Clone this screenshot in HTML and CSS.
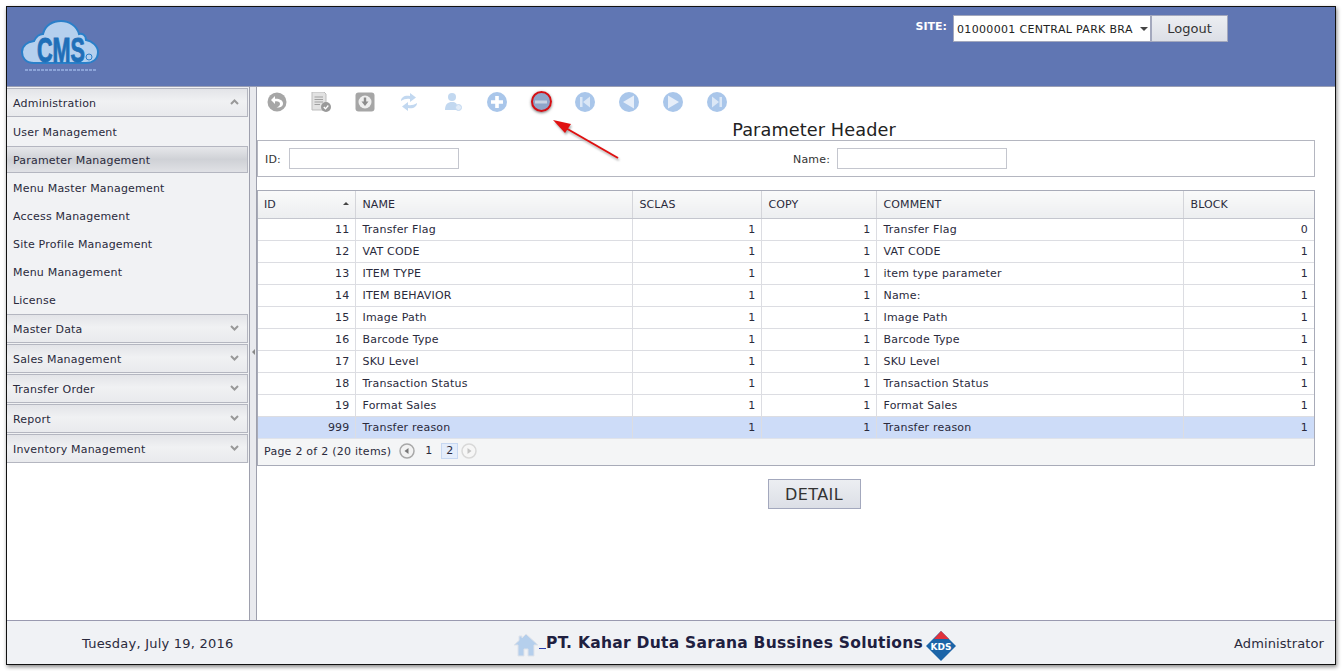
FILE: index.html
```html
<!DOCTYPE html>
<html lang="en">

<head>
	<meta charset="UTF-8">
	<title>CMS - Parameter Management</title>
	<link rel="stylesheet" href="styles.css">
</head>

<body>
	<div id="frame">
		<header id="top">
			<div class="logo">
				<svg width="80" height="56" viewBox="0 0 80 56">
					<path d="M14 44 C5 44 2 38 2 33 C2 27 7 23 14 22 C16 18 19 15 23 15 C25 6 33 2 41 2 C49 2 57 7 59 15 C62 14 66 16 66 21 C72 22 78 27 78 33 C78 40 73 44 66 44 Z" fill="#b5d0ee" stroke="#2a7fc9" stroke-width="2"/>
					<text x="17" y="27" transform="scale(1 1.6)" class="logo-text">CMS</text>
					<circle cx="69" cy="38" r="3" fill="#b5d0ee" stroke="#2a7fc9"/>
					<path d="M5 51 H76" stroke="#8ba3d8" stroke-width="2" stroke-dasharray="3 1"/>
				</svg>
			</div>
			<div class="site">
				<span class="site-label">SITE:</span>
				<div class="site-select">01000001 CENTRAL PARK BRA<span class="caret"></span></div>
				<button class="logout">Logout</button>
			</div>
		</header>

		<div id="middle">
			<nav id="side">
				<div class="panel open">Administration
					<svg class="chev" width="9" height="6" viewBox="0 0 9 6"><path d="M1 5 L4.500 1.500 L8 5" fill="none" stroke="#999" stroke-width="2"/></svg>
				</div>
				<a class="item">User Management</a>
				<a class="item selected">Parameter Management</a>
				<a class="item">Menu Master Management</a>
				<a class="item">Access Management</a>
				<a class="item">Site Profile Management</a>
				<a class="item">Menu Management</a>
				<a class="item">License</a>
				<div class="panel">Master Data
					<svg class="chev" width="9" height="6" viewBox="0 0 9 6"><path d="M1 1 L4.500 4.500 L8 1" fill="none" stroke="#999" stroke-width="2"/></svg>
				</div>
				<div class="panel">Sales Management
					<svg class="chev" width="9" height="6" viewBox="0 0 9 6"><path d="M1 1 L4.500 4.500 L8 1" fill="none" stroke="#999" stroke-width="2"/></svg>
				</div>
				<div class="panel">Transfer Order
					<svg class="chev" width="9" height="6" viewBox="0 0 9 6"><path d="M1 1 L4.500 4.500 L8 1" fill="none" stroke="#999" stroke-width="2"/></svg>
				</div>
				<div class="panel">Report
					<svg class="chev" width="9" height="6" viewBox="0 0 9 6"><path d="M1 1 L4.500 4.500 L8 1" fill="none" stroke="#999" stroke-width="2"/></svg>
				</div>
				<div class="panel">Inventory Management
					<svg class="chev" width="9" height="6" viewBox="0 0 9 6"><path d="M1 1 L4.500 4.500 L8 1" fill="none" stroke="#999" stroke-width="2"/></svg>
				</div>
			</nav>

			<div id="splitter"><span class="grip"></span></div>

			<main id="content">
				<div class="toolbar">
					<svg width="20" height="20" viewBox="0 0 20 20"><circle cx="10" cy="10" r="9.500" fill="#a6a6a6"/><path d="M8 4 L4 8 L8 12 V9.500 C11 9 13 10 13 12 C13 14 11 15 9.500 15.500 C13 16 16 14.500 16 11.500 C16 8 12 6.500 8 6.800 Z" fill="#fff"/></svg>
					<svg width="20" height="20" viewBox="0 0 20 20"><path d="M1 0 H13 L15 2 V18 H1 Z" fill="#e2e2e2" stroke="#bdbdbd"/><path d="M3.500 5 H12 M3.500 7.500 H12 M3.500 10 H12 M3.500 12.500 H9" stroke="#a0a0a0"/><circle cx="15" cy="15" r="5" fill="#999"/><path d="M12.800 15 L14.500 16.800 L17.300 13.500" fill="none" stroke="#fff" stroke-width="1.300"/></svg>
					<svg width="20" height="20" viewBox="0 0 20 20"><rect x="0.500" y="0.500" width="19" height="19" rx="3" fill="#a6a6a6"/><circle cx="10" cy="10" r="6.500" fill="#eee"/><path d="M8.800 5.500 H11.200 V9.500 H13.500 L10 14 L6.500 9.500 H8.800 Z" fill="#8c8c8c"/></svg>
					<svg width="20" height="20" viewBox="0 0 20 20"><path d="M2 9 C2 5 6 3 11 4 V1 L17 5.500 L11 10 V7 C8 6.500 5 7 2 9 Z M18 11 C18 15 14 17 9 16 V19 L3 14.500 L9 10 V13 C12 13.500 15 13 18 11 Z" fill="#c2d8f0"/></svg>
					<svg width="20" height="20" viewBox="0 0 20 20"><circle cx="9" cy="5" r="4" fill="#c2d8f0"/><path d="M2 18 C2 12 5 10 9 10 C13 10 14 12 14 14 V18 Z" fill="#c2d8f0"/><circle cx="15.500" cy="15.500" r="3" fill="#e2ecf8" stroke="#c2d8f0"/></svg>
					<svg width="20" height="20" viewBox="0 0 20 20"><circle cx="10" cy="10" r="10" fill="#a9c6ea"/><path d="M8.200 4 H11.800 V8.200 H16 V11.800 H11.800 V16 H8.200 V11.800 H4 V8.200 H8.200 Z" fill="#fff"/></svg>
					<svg width="20" height="20" viewBox="0 0 20 20"><circle cx="10" cy="10" r="10" fill="#8fa5c9"/><rect x="4" y="8.500" width="12" height="3" fill="#c9d3e3"/></svg>
					<svg width="20" height="20" viewBox="0 0 20 20"><circle cx="10" cy="10" r="10" fill="#a9c6ea"/><path d="M5 5 H7.500 V15 H5 Z M15 4.500 V15.500 L8 10 Z" fill="#dbe7f6"/></svg>
					<svg width="20" height="20" viewBox="0 0 20 20"><circle cx="10" cy="10" r="10" fill="#a9c6ea"/><path d="M15 3.500 V16.500 L4 10 Z" fill="#e6eef9"/></svg>
					<svg width="20" height="20" viewBox="0 0 20 20"><circle cx="10" cy="10" r="10" fill="#a9c6ea"/><path d="M5 3.500 V16.500 L16 10 Z" fill="#e6eef9"/></svg>
					<svg width="20" height="20" viewBox="0 0 20 20"><circle cx="10" cy="10" r="10" fill="#a9c6ea"/><path d="M15 5 H12.500 V15 H15 Z M5 4.500 V15.500 L12 10 Z" fill="#dbe7f6"/></svg>
				</div>

				<h1 class="title">Parameter Header</h1>

				<div class="filter">
					<label class="filter-id">ID:</label>
					<input class="field" type="text">
					<label class="filter-name">Name:</label>
					<input class="field" type="text">
				</div>

				<div class="grid">
					<table>
						<colgroup>
							<col class="c-id"><col class="c-name"><col class="c-sclas"><col class="c-copy"><col class="c-comment"><col>
						</colgroup>
						<thead>
							<tr>
								<th>ID<span class="sort"></span></th>
								<th>NAME</th>
								<th>SCLAS</th>
								<th>COPY</th>
								<th>COMMENT</th>
								<th>BLOCK</th>
							</tr>
						</thead>
						<tbody>
							<tr><td class="num">11</td><td>Transfer Flag</td><td class="num">1</td><td class="num">1</td><td>Transfer Flag</td><td class="num">0</td></tr>
							<tr><td class="num">12</td><td>VAT CODE</td><td class="num">1</td><td class="num">1</td><td>VAT CODE</td><td class="num">1</td></tr>
							<tr><td class="num">13</td><td>ITEM TYPE</td><td class="num">1</td><td class="num">1</td><td>item type parameter</td><td class="num">1</td></tr>
							<tr><td class="num">14</td><td>ITEM BEHAVIOR</td><td class="num">1</td><td class="num">1</td><td>Name:</td><td class="num">1</td></tr>
							<tr><td class="num">15</td><td>Image Path</td><td class="num">1</td><td class="num">1</td><td>Image Path</td><td class="num">1</td></tr>
							<tr><td class="num">16</td><td>Barcode Type</td><td class="num">1</td><td class="num">1</td><td>Barcode Type</td><td class="num">1</td></tr>
							<tr><td class="num">17</td><td>SKU Level</td><td class="num">1</td><td class="num">1</td><td>SKU Level</td><td class="num">1</td></tr>
							<tr><td class="num">18</td><td>Transaction Status</td><td class="num">1</td><td class="num">1</td><td>Transaction Status</td><td class="num">1</td></tr>
							<tr><td class="num">19</td><td>Format Sales</td><td class="num">1</td><td class="num">1</td><td>Format Sales</td><td class="num">1</td></tr>
							<tr class="active"><td class="num">999</td><td>Transfer reason</td><td class="num">1</td><td class="num">1</td><td>Transfer reason</td><td class="num">1</td></tr>
						</tbody>
					</table>
					<div class="pager">
						<span class="pager-info">Page 2 of 2 (20 items)</span>
						<svg class="pager-btn" width="16" height="16" viewBox="0 0 16 16"><circle cx="8" cy="8" r="7" fill="#f2f2f2" stroke="#a8a8a8" stroke-width="1.500"/><path d="M9.500 5 V11 L5.500 8 Z" fill="#777"/></svg>
						<span class="page">1</span>
						<span class="page current">2</span>
						<svg class="pager-btn" width="16" height="16" viewBox="0 0 16 16"><circle cx="8" cy="8" r="7" fill="#f6f6f6" stroke="#d8d8d8" stroke-width="1.500"/><path d="M6.500 5 V11 L10.500 8 Z" fill="#c4c4c4"/></svg>
					</div>
				</div>

				<div class="detail-row"><button class="detail">DETAIL</button></div>

				<!-- annotation from the screenshot -->
				<span class="ring"></span>
				<svg class="arrow" width="80" height="50" viewBox="0 0 80 50">
					<path d="M68 45 L14 14" stroke="#e01010" stroke-width="2" fill="none"/>
					<path d="M3 7 L21 11 L15 20 Z" fill="#e01010"/>
				</svg>
			</main>
		</div>

		<footer id="bottom">
			<div class="date">Tuesday, July 19, 2016</div>
			<div class="company">
				<svg class="home" width="26" height="24" viewBox="0 0 26 24"><path d="M13 1 L25 12 H21 V23 H15 V16 H11 V23 H5 V12 H1 L6 7.500 V3 H9 V5 Z" fill="#b5cfec" stroke="#dfe3ea"/></svg>
				<span class="underscore">&nbsp;&nbsp;</span><span class="company-name">PT. Kahar Duta Sarana Bussines Solutions</span>
				<svg class="kds" width="30" height="30" viewBox="0 0 30 30">
					<path d="M15 0 L30 15 L15 30 L0 15 Z" fill="#1c65a8"/>
					<path d="M15 0 L23 8 L8 8 Z" fill="#e0323c"/>
					<text x="15" y="18.500" text-anchor="middle" class="kds-text">KDS</text>
				</svg>
			</div>
			<div class="user">Administrator</div>
		</footer>
	</div>
</body>

</html>
```

FILE: styles.css
```css
html,
body {
	margin: 0;
	height: 100%;
	background: #fff;
	font-family: 'DejaVu Sans', Verdana, sans-serif;
	font-size: 11px;
	color: #2a2a3c;
	overflow: hidden;
}

body {
	padding: 6px;
	box-sizing: border-box;
}

#frame {
	width: 1330px;
	height: 659px;
	box-sizing: border-box;
	border: 1px solid #111;
	box-shadow: 1px 2px 4px #888;
	display: flex;
	flex-direction: column;
}

/* header */
#top {
	height: 79px;
	flex: none;
	background: #6076b3;
	border-bottom: 1px solid #9a9fb5;
	display: flex;
	justify-content: space-between;
}

.logo {
	padding: 12px 0 0 13px;
}

.logo-text {
	font-family: 'Liberation Sans', sans-serif;
	font-weight: bold;
	font-size: 21.600px;
	fill: #1f6fb8;
	stroke: #1f6fb8;
	stroke-width: 0.6px;
}

.site {
	display: flex;
	align-items: flex-start;
	padding: 8px 107px 0 0;
}

.site-label {
	color: #fff;
	font-weight: bold;
	font-size: 11px;
	margin: 5px 6px 0 0;
}

.site-select {
	width: 198px;
	height: 27px;
	box-sizing: border-box;
	background: #fff;
	border: 1px solid #a3a8bd;
	padding-left: 3px;
	line-height: 27px;
	letter-spacing: 0.33px;
	position: relative;
	color: #222;
}

.caret {
	position: absolute;
	right: 2px;
	top: 11px;
	border: 4px solid transparent;
	border-top-color: #444;
	border-bottom: 0;
}

.logout {
	width: 77px;
	height: 27px;
	border: 1px solid #a3a8bd;
	background: linear-gradient(#eceef2, #dcdfe6);
	font: 13px 'DejaVu Sans', sans-serif;
	color: #333;
	padding: 0;
}

/* middle part */
#middle {
	flex: 1;
	display: flex;
	min-height: 0;
}

#side {
	width: 242px;
	flex: none;
	padding-top: 1px;
	box-sizing: border-box;
	background: linear-gradient(#f1f2f4 376px, #fff 376px);
}

.panel {
	height: 29px;
	box-sizing: border-box;
	margin: 0 0 1px 0;
	width: 241px;
	padding: 2px 0 0 6px;
	border: 1px solid #b4b6c0;
	border-left: 0;
	background: linear-gradient(#e3e4e8, #f0f1f3 45%, #e9eaed);
	line-height: 25px;
	position: relative;
	letter-spacing: 0.2px;
}

.chev {
	position: absolute;
	right: 8px;
	top: 10px;
}

.item {
	display: block;
	height: 28px;
	width: 241px;
	box-sizing: border-box;
	padding: 1px 0 0 6px;
	line-height: 27px;
	letter-spacing: 0.2px;
}

.item.selected {
	height: 27px;
	line-height: 25px;
	margin-bottom: 1px;
	border: 1px solid #b4b6c0;
	border-left: 0;
	background: linear-gradient(#e6e7ea, #cfd1d6 50%, #e0e1e5);
}

#splitter {
	width: 8px;
	flex: none;
	box-sizing: border-box;
	background: #e9eaee;
	border-left: 1px solid #9ea0ad;
	border-right: 1px solid #9ea0ad;
	position: relative;
}

.grip {
	position: absolute;
	left: 2px;
	top: 262px;
	border: 3px solid transparent;
	border-right-color: #888;
	border-left: 0;
}

#content {
	flex: 1;
	position: relative;
	padding: 0 20px 0 0;
	background: #fff;
}

.toolbar {
	height: 20px;
	padding: 5px 0 0 10px;
	display: flex;
	gap: 24px;
	margin-bottom: 1px;
}

.title {
	margin: 0;
	height: 27px;
	box-sizing: border-box;
	padding: 4px 0 0 56px;
	font-size: 17.700px;
	font-weight: normal;
	line-height: 27px;
	text-align: center;
	color: #222;
	letter-spacing: 0.1px;
}

.filter {
	height: 37px;
	box-sizing: border-box;
	border: 1px solid #b4b6c0;
	display: flex;
	align-items: center;
	padding-left: 7px;
}

.filter label {
	color: #333;
	margin-top: 1px;
	letter-spacing: 0.2px;
}

.filter-id {
	width: 24px;
}

.filter-name {
	margin-left: 334px;
	width: 44px;
}

.field {
	width: 170px;
	height: 21px;
	box-sizing: border-box;
	border: 1px solid #c4c6ce;
	background: #fff;
	padding: 0;
}

.grid {
	margin-top: 13px;
	border: 1px solid #a8abb8;
}

table {
	width: 100%;
	border-collapse: collapse;
	table-layout: fixed;
}

.c-id { width: 97px; }
.c-name { width: 277px; }
.c-sclas { width: 129px; }
.c-copy { width: 115px; }
.c-comment { width: 307px; }

th {
	height: 27px;
	padding: 0 6px 0 7px;
	text-align: left;
	font-weight: normal;
	background: linear-gradient(#fafafa, #eceef0);
	border-left: 1px solid #d4d5da;
	border-bottom: 1px solid #c4c6ce;
	position: relative;
	letter-spacing: 0.1px;
}

th:first-child,
td:first-child {
	border-left: 0;
	padding-left: 6px;
}

.sort {
	position: absolute;
	right: 6px;
	top: 11px;
	border: 3.500px solid transparent;
	border-bottom-color: #444;
	border-top: 0;
}

td {
	height: 21px;
	padding: 0 6px 0 7px;
	border-left: 1px solid #dcdde2;
	border-bottom: 1px solid #dcdde2;
	white-space: nowrap;
	letter-spacing: 0.2px;
}

td.num {
	text-align: right;
	padding-right: 5px;
}

td.num:last-child {
	padding-right: 6px;
}

.active td {
	background: #cddcf8;
	border-bottom-color: #e0e3ea;
}

.pager {
	height: 26px;
	box-sizing: border-box;
	padding: 0 0 2px 6px;
	background: #f4f5f6;
	display: flex;
	align-items: center;
	letter-spacing: 0.25px;
}

.pager-info {
	margin-right: 8px;
}

.page {
	width: 17px;
	height: 16px;
	margin-left: 5px;
	box-sizing: border-box;
	text-align: center;
	line-height: 14px;
	border: 1px solid transparent;
}

.page.current {
	background: #e4edfb;
	border-color: #c7d8f2;
	margin-left: 4px;
	margin-right: 3px;
}

.detail-row {
	display: flex;
	justify-content: center;
	margin-top: 13px;
	padding-left: 56px;
}

.detail {
	width: 93px;
	height: 30px;
	border: 1px solid #a3a8bd;
	background: linear-gradient(#eceef2, #dcdfe6);
	font: 16px 'DejaVu Sans', sans-serif;
	letter-spacing: 0.4px;
	color: #333;
	padding: 0;
}

.ring {
	position: absolute;
	left: 274px;
	top: 4px;
	width: 17px;
	height: 17px;
	border: 2px solid #d40f14;
	border-radius: 50%;
	box-shadow: 0 1px 3px #777;
}

.arrow {
	position: absolute;
	left: 293px;
	top: 26px;
	filter: drop-shadow(1px 2px 1px #aaa);
}

/* footer */
#bottom {
	height: 44px;
	flex: none;
	box-sizing: border-box;
	background: #f0f2f5;
	border-top: 1px solid #9a9ab0;
	display: flex;
	align-items: center;
	font-size: 13px;
	padding: 0 11px 0 75px;
}

.date {
	width: 431px;
	flex: none;
	letter-spacing: 0.22px;
	margin-top: 1px;
}

.company {
	display: flex;
	align-items: center;
}

.home {
	margin-top: 5px;
}

.underscore {
	text-decoration: underline;
	width: 7px;
	overflow: hidden;
	color: #2a3fae;
}

.company-name {
	font-weight: bold;
	font-size: 15.500px;
	letter-spacing: 0.27px;
	color: #202040;
}

.kds {
	margin-left: 3px;
	margin-top: 6px;
}

.kds-text {
	font-family: 'DejaVu Sans', sans-serif;
	font-weight: bold;
	font-size: 9px;
	fill: #fff;
}

.user {
	margin-left: auto;
	letter-spacing: 0.1px;
	margin-top: 1px;
}
```
